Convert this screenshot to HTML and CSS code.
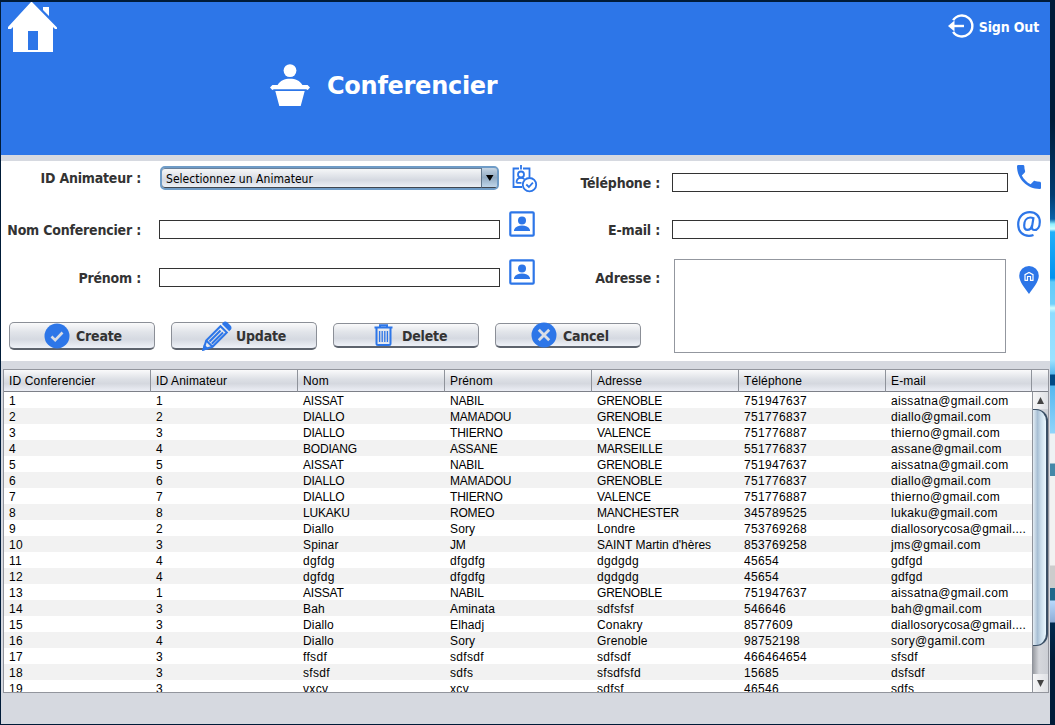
FILE: index.html
```html
<!DOCTYPE html>
<html lang="fr">
<head>
<meta charset="utf-8">
<title>Conferencier</title>
<link rel="stylesheet" href="styles.css">
</head>
<body>
<svg class="defs" width="0" height="0">
  <symbol id="contact" viewBox="0 0 26 26">
    <rect x="1.300" y="1.300" width="23.400" height="23.400" rx="1" fill="none" stroke="#2d76e8" stroke-width="2.200"/>
    <circle cx="13" cy="9.400" r="4"/><path d="M5 20v-1.200c1.200-2.800 4.600-4.200 8-4.200s6.800 1.400 8 4.200V20z"/>
  </symbol>
</svg>
<div class="window">
  <header class="banner">
    <svg class="home" width="52" height="52" viewBox="0 0 52 52" fill="#fff">
      <path d="M25 0 50 25.500v1.500h-2l-2-2V50H6V25l-2 2H1v-2L24 0zM36 5h6v9L36 8z"/>
      <path fill="#2d76e8" d="M21 29h10v19H21z"/>
    </svg>
    <div class="heading">
      <svg width="40" height="43" viewBox="0 0 40 43" fill="#fff">
        <circle cx="20" cy="6.600" r="6.400"/>
        <path d="M7.600 21c2.500-4.500 7-6.300 12.400-6.300s9.900 1.800 12.400 6.300h5.200L40 23.600 37.700 26l-1.500-.8H3.800l-1.500.8L0 23.600 2.400 21zM5.300 26.900h29.400l-4 15H9.300z"/>
      </svg>
      <h1>Conferencier</h1>
    </div>
    <div class="signout">
      <svg width="26" height="24" viewBox="0 0 26 24" fill="none" stroke="#fff" stroke-width="2.400">
        <path d="M5.100 6.200A10.500 10.500 0 1 1 5.100 17.800"/><path d="M5 12h11"/><path fill="#fff" stroke="none" d="M0 12l6.500-5.500v11z"/>
      </svg>
      <span>Sign Out</span>
    </div>
  </header>

  <section class="form">
    <div class="left">
      <div class="row r1"><label>ID Animateur :</label>
        <div class="combo"><span>Selectionnez un Animateur</span><i><svg width="8" height="6"><path d="M0 0h7.500L3.800 6z"/></svg></i></div>
        <svg class="badge" width="26" height="28" viewBox="0 0 26 28" fill="none" stroke="#2d76e8" stroke-width="1.800">
          <path d="M10 22H1.500V3.500H7M11 3.500h6.500V12M9 0v4.500"/><circle cx="9" cy="9.500" r="3"/><path d="M4.500 17.800c0-3.600 2-5 4.500-5 1.500 0 2.500.4 3.300 1.300M4.500 17.800h5"/><circle cx="17.500" cy="19.700" r="6.700"/><path d="M14.300 19.500l2.600 2.500 4-4.300"/>
        </svg>
      </div>
      <div class="row"><label>Nom Conferencier :</label><input><svg class="person" width="26" height="26" fill="#2d76e8"><use href="#contact"/></svg></div>
      <div class="row"><label>Prénom :</label><input><svg class="person" width="26" height="26" fill="#2d76e8"><use href="#contact"/></svg></div>
      <div class="buttons">
        <button class="tall create"><svg width="26" height="26" viewBox="0 0 26 26"><circle cx="13" cy="13" r="12.500" fill="#2d76e8"/><path d="M7.500 13.500l3.700 3.700 7.300-7.700" fill="none" stroke="#d9dde5" stroke-width="2.600"/></svg><span>Create</span></button>
        <button class="tall update"><svg width="30" height="30" viewBox="0 0 30 30" fill="none" stroke="#2d76e8" stroke-width="2"><path d="M1.500 28.500l2.700-9L18.500 5.200l6.300 6.300L10.500 25.800zM4.200 19.500l6.300 6.300M7.500 20.500L18.500 9.500M9.800 22.800L21 11.500"/><path fill="#2d76e8" d="M21.300 2.800q1.700-2.200 3.500-.5l3 3q1.700 1.700-.5 3.500zM1.500 28.500l1-3.500 2.500 2.500z"/></svg><span>Update</span></button>
        <button class="delete"><svg width="19" height="22" viewBox="0 0 19 22" fill="none" stroke="#2d76e8" stroke-width="2"><path d="M.5 3.500h18M6 3V1.200h7V3M2.500 4v15.500q0 1.500 1.500 1.500h11q1.500 0 1.500-1.500V4"/><path stroke-width="1.300" d="M5.600 7v11M8.200 7v11M10.800 7v11M13.400 7v11"/></svg><span>Delete</span></button>
        <button class="cancel"><svg width="26" height="26" viewBox="0 0 26 26"><circle cx="13" cy="13" r="12.500" fill="#2d76e8"/><path d="M7.800 7.800l10.400 10.400M18.200 7.800L7.800 18.200" stroke="#d9dde5" stroke-width="2.800"/></svg><span>Cancel</span></button>
      </div>
    </div>
    <div class="right">
      <div class="row tel"><label>Téléphone :</label><input><svg class="phone" width="24" height="24" viewBox="3 3 18 18" fill="#2d76e8"><path d="M6.620 10.790c1.440 2.830 3.760 5.140 6.590 6.590l2.200-2.200c.27-.27.670-.36 1.020-.24 1.120.37 2.330.57 3.570.57.550 0 1 .45 1 1V20c0 .55-.45 1-1 1C10.610 21 3 13.390 3 4c0-.55.450-1 1-1h3.500c.55 0 1 .45 1 1 0 1.250.2 2.450.57 3.570.11.350.03.740-.25 1.020z"/></svg></div>
      <div class="row mail"><label>E-mail :</label><input><svg class="at" width="24" height="26" viewBox="0 0 24 26" fill="none" stroke="#2d76e8" stroke-width="2.200"><path d="M16.500 24c-1.500.6-3 .9-4.500.9C5.500 24.900 1.200 20.500 1.200 13.500 1.200 6 6 1.200 12.800 1.200c6 0 10 3.800 10 9.800 0 4.800-2.300 8-5.300 8-2 0-2.800-1.300-2.500-3.200l1.400-8.600c-1-.5-2-.7-3.200-.7-3.800 0-6 3.500-6 7.700 0 3 1.200 4.700 3.200 4.700 2.300 0 4-1.900 4.600-4.400"/></svg></div>
      <div class="row addr"><label>Adresse :</label><textarea></textarea><svg class="pin" width="20" height="28" viewBox="0 0 20 28"><path fill="#2d76e8" d="M10 0a9.800 9.800 0 0 1 9.800 9.800C19.800 16 14 22 10 28 6 22 .2 16 .2 9.800A9.800 9.800 0 0 1 10 0z"/><path fill="none" stroke="#fff" stroke-width="1.200" d="M5.500 14.300h3V10.500h3v3.800h3M6 14.300V8.600l4-2.200 4 2.200v5.700"/></svg></div>
    </div>
  </section>

  <section class="grid">
    <table>
      <thead><tr><th>ID Conferencier</th><th>ID Animateur</th><th>Nom</th><th>Prénom</th><th>Adresse</th><th>Téléphone</th><th class="last">E-mail</th><th class="corner"></th></tr></thead>
      <tbody id="rows"></tbody>
    </table>
    <div class="scrollbar">
      <div class="arrow"><svg width="7" height="7"><path d="M3.500 0L7 7H0z"/></svg></div>
      <div class="track"><div class="thumb"></div></div>
      <div class="arrow down"><svg width="7" height="7"><path d="M0 0h7L3.500 7z"/></svg></div>
    </div>
  </section>
</div>
<aside class="desktop"></aside>
<script src="app.js"></script>
</body>
</html>
```
FILE: styles.css
```css
* { box-sizing: border-box; }
body { margin: 0; width: 1055px; height: 725px; overflow: hidden; display: flex; background: #001b38; padding: 2px 0 1px 1px; font-family: "DejaVu Sans Condensed", "DejaVu Sans", sans-serif; }
.defs { display: block; position: absolute; }
.window { width: 1049px; height: 722px; background: #d6d9e0; flex: none; }
.desktop { width: 5px; height: 725px; margin-top: -2px; background: linear-gradient(#001b38 0, #001b38 120px, #00284f 150px, #003c70 195px, #0a62a8 219px, #90f0ff 224px, #d0ffff 229px, #20b0fa 232px, #0092ee 278px, #60ccfa 282px, #70d0fa 304px, #d0ffff 308px, #8edcff 313px, #9be2ff 360px, #58b8ee 374px, #004a85 375px, #004a85 385px, #55b8f0 386px, #90d4fa 433px, #eef2f4 434px, #eef2f4 463px, #4488a8 464px, #4488a8 476px, #f2f2f2 476px, #f2f2f2 565px, #cccccc 566px, #cccccc 588px, #20688a 588px, #20688a 600px, #b8d8fc 601px, #8eadd6 622px, #00294d 623px, #001b38 660px); }

.banner { height: 153px; background: #2d76e8; display: flex; color: #fff; }
.home { margin-left: 6px; }
.heading { display: flex; margin: 62px 0 0 211px; width: 230px; flex: none; }
.heading svg { flex: none; }
h1 { margin: 7px 0 0 17px; font: bold 24px/31px "DejaVu Sans", sans-serif; letter-spacing: -.27px; }
.signout { display: flex; margin: 12px 11px 0 auto; font-weight: bold; font-size: 14px; line-height: 26px; letter-spacing: -.15px; }
.signout svg { margin-right: 5px; }

.form { margin-top: 6px; height: 200px; background: #fff; display: flex; }
.left { width: 570px; }
.right { width: 479px; }
.row { display: flex; height: 48px; align-items: flex-start; }
.row.r1 { height: 52px; }
label { flex: none; display: flex; justify-content: flex-end; width: 140px; margin-top: 7px; font-size: 14px; line-height: 20px; font-weight: bold; color: #333; letter-spacing: -.2px; white-space: nowrap; }
input { width: 341px; height: 19px; margin: 7px 0 0 18px; border: 1px solid #333; padding: 0; background: #fff; outline: 0; flex: none; }
.combo { flex: none; width: 339px; height: 24px; margin: 5px 0 0 19px; border: 2px solid #6f9cc7; border-radius: 5px; box-shadow: inset 0 -1px #40464f, inset 0 1px #69829d; background: linear-gradient(#f8f9fa, #d5d9e1 60%, #f0f3f8); display: flex; justify-content: space-between; font-size: 12px; color: #000; overflow: hidden; }
.combo span { margin-left: 4px; line-height: 22px; letter-spacing: .04px; }
.combo i { width: 16px; border-left: 1px solid #60758a; border-bottom: 1px solid #40464f; background: linear-gradient(#c6d5e3, #91aac2 50%, #c0d6ea); display: flex; align-items: center; justify-content: center; }
.badge { margin: 4px 0 0 13px; }
.person { margin: -2px 0 0 9px; }

.buttons { display: flex; gap: 16px; padding: 13px 0 0 8px; align-items: flex-start; }
button { flex: none; width: 146px; height: 25px; margin-top: 1px; padding: 0; border: 1px solid #8b8f97; border-bottom: 2px solid #5d636d; border-radius: 5px; background: linear-gradient(#fafafb, #e2e5ea 35%, #d5d9e1 65%, #eff2f8); display: flex; align-items: center; justify-content: flex-start; gap: 6px; font: bold 14px/18px "DejaVu Sans Condensed", "DejaVu Sans", sans-serif; color: #333; letter-spacing: -.2px; }
button svg { flex: none; }
button.tall { height: 28px; margin-top: 0; }
.create { padding-left: 34px; }
.update { padding-left: 30px; gap: 4px; }
.delete { padding-left: 40px; gap: 9px; }
.cancel { padding-left: 35px; }
.delete span, .cancel span { padding-top: 2px; }

.right label { width: 89px; }
.right input { width: 336px; margin-left: 12px; }
.tel { height: 52px; }
.tel input, .row.tel label { margin-top: 12px; }
.phone { margin: 4px 0 0 9px; }
.mail { height: 46px; }
.at { margin: -2px 0 0 9px; }
.row.addr label { margin-top: 9px; }
textarea { flex: none; width: 332px; height: 94px; margin: 0 0 0 14px; border: 1px solid #93979f; resize: none; padding: 0; }
.pin { margin: 7px 0 0 13px; }

.grid { position: relative; margin: 8px 0 0 2px; width: 1046px; height: 324px; border: 1px solid #92959d; overflow: hidden; font: 12px/16px "Liberation Sans", Arial, sans-serif; color: #000; }
table { width: 1044px; table-layout: fixed; border-collapse: separate; border-spacing: 0; }
th { width: 147px; height: 22px; padding: 0 5px; text-align: left; font-weight: normal; border-right: 1px solid #8f939b; border-bottom: 1px solid #7d8088; background: linear-gradient(#fafafb, #dcdfe5 45%, #d5d8df 65%, #eceef5); letter-spacing: .15px; }
th.last { width: 146px; }
th.corner { width: 16px; padding: 0; border-right: 0; }
td { height: 16px; padding: 2px 0 0 5px; line-height: 14px; white-space: nowrap; letter-spacing: .33px; background: #fff; }
td.caps { letter-spacing: -.2px; }
td.name { letter-spacing: .15px; }
td.phrase { letter-spacing: 0; }
td.long { letter-spacing: .2px; }
tr:nth-child(even) td { background: #f2f2f2; }
.scrollbar { position: absolute; right: 0; top: 22px; width: 16px; height: 300px; border-left: 1px solid #8f939b; display: flex; flex-direction: column; background: #d6d9e0; }
.arrow { height: 17px; display: flex; align-items: center; justify-content: center; background: linear-gradient(90deg, #f6f6f7, #dfe1e5); fill: #444; }
.track { flex: 1; background: linear-gradient(90deg, #999ca2, #d5d7dc 40%, #cccfd5); }
.thumb { height: 237px; border: 1px solid #394e64; border-left: 0; border-right-width: 2px; border-radius: 0 12px 12px 0; background: linear-gradient(90deg, #e4edf4, #a8bfd4 35%, #c9dcea 60%, #eaf8ff); }
.down { height: 18px; }
```
FILE: app.js
```js
const people = [
  ["1", "1", "AISSAT", "NABIL", "GRENOBLE", "751947637", "aissatna@gmail.com"],
  ["2", "2", "DIALLO", "MAMADOU", "GRENOBLE", "751776837", "diallo@gmail.com"],
  ["3", "3", "DIALLO", "THIERNO", "VALENCE", "751776887", "thierno@gmail.com"],
  ["4", "4", "BODIANG", "ASSANE", "MARSEILLE", "551776837", "assane@gmail.com"],
  ["5", "5", "AISSAT", "NABIL", "GRENOBLE", "751947637", "aissatna@gmail.com"],
  ["6", "6", "DIALLO", "MAMADOU", "GRENOBLE", "751776837", "diallo@gmail.com"],
  ["7", "7", "DIALLO", "THIERNO", "VALENCE", "751776887", "thierno@gmail.com"],
  ["8", "8", "LUKAKU", "ROMEO", "MANCHESTER", "345789525", "lukaku@gmail.com"],
  ["9", "2", "Diallo", "Sory", "Londre", "753769268", "diallosorycosa@gmail...."],
  ["10", "3", "Spinar", "JM", "SAINT Martin d'hères", "853769258", "jms@gmail.com"],
  ["11", "4", "dgfdg", "dfgdfg", "dgdgdg", "45654", "gdfgd"],
  ["12", "4", "dgfdg", "dfgdfg", "dgdgdg", "45654", "gdfgd"],
  ["13", "1", "AISSAT", "NABIL", "GRENOBLE", "751947637", "aissatna@gmail.com"],
  ["14", "3", "Bah", "Aminata", "sdfsfsf", "546646", "bah@gmail.com"],
  ["15", "3", "Diallo", "Elhadj", "Conakry", "8577609", "diallosorycosa@gmail...."],
  ["16", "4", "Diallo", "Sory", "Grenoble", "98752198", "sory@gamil.com"],
  ["17", "3", "ffsdf", "sdfsdf", "sdfsdf", "466464654", "sfsdf"],
  ["18", "3", "sfsdf", "sdfs", "sfsdfsfd", "15685", "dsfsdf"],
  ["19", "3", "vxcv", "xcv", "sdfsf", "46546", "sdfs"]
];
function spacingClass(value) {
  if (/^[A-Z]+$/.test(value)) return "caps";
  if (/ /.test(value)) return "phrase";
  if (/^[A-Z]/.test(value)) return "name";
  if (value.length > 20) return "long";
  return "";
}
const body = document.getElementById("rows");
for (const person of people) {
  const row = body.insertRow();
  for (const value of person) {
    const cell = row.insertCell();
    cell.textContent = value;
    cell.className = spacingClass(value);
  }
  row.insertCell();
}
```
